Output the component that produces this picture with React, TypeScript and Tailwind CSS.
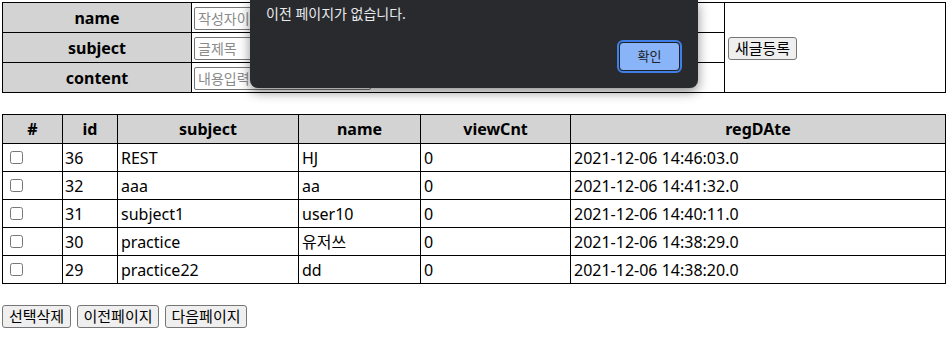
import { useState } from "react";

const ROWS = [
  { id: 36, subject: "REST", name: "HJ", viewCnt: 0, regDate: "2021-12-06 14:46:03.0" },
  { id: 32, subject: "aaa", name: "aa", viewCnt: 0, regDate: "2021-12-06 14:41:32.0" },
  { id: 31, subject: "subject1", name: "user10", viewCnt: 0, regDate: "2021-12-06 14:40:11.0" },
  { id: 30, subject: "practice", name: "유저쓰", viewCnt: 0, regDate: "2021-12-06 14:38:29.0" },
  { id: 29, subject: "practice22", name: "dd", viewCnt: 0, regDate: "2021-12-06 14:38:20.0" },
];

const font = "font-['Noto_Sans','Noto_Sans_CJK_KR',sans-serif]";
const btn =
  "h-[23px] rounded-[3px] border border-[#767676] bg-[#efefef] px-0 text-center text-[15px] leading-none text-black";

function Field({ placeholder }: { placeholder: string }) {
  return (
    <input
      type="text"
      placeholder={placeholder}
      className="h-[23px] w-[177px] rounded-[2px] border border-[#767676] bg-white px-[3px] text-[14px] placeholder:text-[#8a8a8a] outline-none"
    />
  );
}

export default function App() {
  const [checked, setChecked] = useState<number[]>([]);
  const toggle = (id: number) =>
    setChecked((c) => (c.includes(id) ? c.filter((x) => x !== id) : [...c, id]));

  return (
    <div className={`relative h-[354px] w-[952px] bg-white p-[2px] text-[16px] text-black ${font}`}>
      {/* write form */}
      <table className="w-[944px] border-collapse">
        <tbody>
          {[
            ["name", "작성자이름"],
            ["subject", "글제목"],
            ["content", "내용입력"],
          ].map(([label, ph], i) => (
            <tr key={label} className="h-[30px]">
              <th className="w-[189px] border border-black bg-[#d3d3d3] p-0 text-center font-bold">{label}</th>
              <td className="w-[533px] border border-black px-[2px] py-0 align-middle">
                <Field placeholder={ph} />
              </td>
              {i === 0 && (
                <td rowSpan={3} className="border border-black px-[3px] align-middle">
                  <button className={`${btn} w-[69px]`}>새글등록</button>
                </td>
              )}
            </tr>
          ))}
        </tbody>
      </table>

      {/* list */}
      <table className="mt-[21px] w-[944px] border-collapse">
        <thead>
          <tr className="h-[29px] bg-[#d3d3d3]">
            <th className="w-[60px] border border-black font-bold">#</th>
            <th className="w-[55px] border border-black font-bold">id</th>
            <th className="w-[181px] border border-black font-bold">subject</th>
            <th className="w-[122px] border border-black font-bold">name</th>
            <th className="w-[150px] border border-black font-bold">viewCnt</th>
            <th className="border border-black font-bold">regDAte</th>
          </tr>
        </thead>
        <tbody>
          {ROWS.map((r) => (
            <tr key={r.id} className="h-[28px]">
              <td className="border border-black px-[3px] py-0 align-middle">
                <input
                  type="checkbox"
                  checked={checked.includes(r.id)}
                  onChange={() => toggle(r.id)}
                  className="ml-[4px] block h-[13px] w-[13px]"
                />
              </td>
              <td className="border border-black px-[2px] py-0">{r.id}</td>
              <td className="border border-black px-[3px] py-0">{r.subject}</td>
              <td className="border border-black px-[3px] py-0">{r.name}</td>
              <td className="border border-black px-[3px] py-0">{r.viewCnt}</td>
              <td className="border border-black px-[3px] py-0">{r.regDate}</td>
            </tr>
          ))}
        </tbody>
      </table>

      <div className="mt-[21px] flex gap-[6px]">
        <button className={`${btn} w-[69px]`}>선택삭제</button>
        <button className={`${btn} w-[82px]`}>이전페이지</button>
        <button className={`${btn} w-[82px]`}>다음페이지</button>
      </div>

      {/* browser alert */}
      <div className="absolute left-[250px] top-0 h-[88px] w-[448px] rounded-b-[8px] bg-[#292a2d] shadow-[0_4px_12px_rgba(0,0,0,0.45)]">
        <p className="pl-[16px] pt-[3px] text-[14px] text-[#e8eaed]">이전 페이지가 없습니다.</p>
        <div className="absolute right-[16px] top-[40px] rounded-[6px] border-2 border-[#3f7fe8]">
          <button className="h-[29px] w-[61px] rounded-[4px] border border-[#202124] bg-[#8ab4f8] text-[13px] text-[#202124]">
            확인
          </button>
        </div>
      </div>
    </div>
  );
}
